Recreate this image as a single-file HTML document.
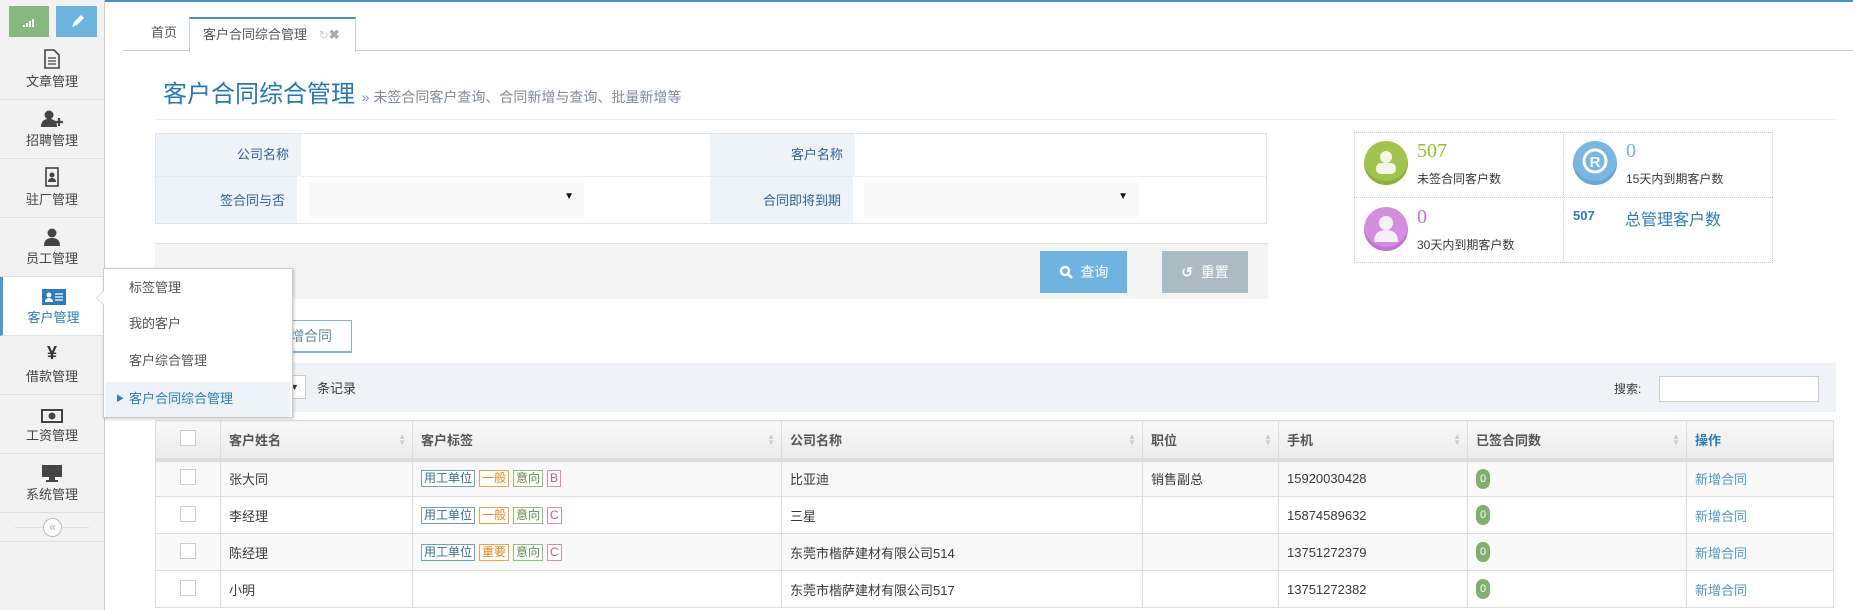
<!DOCTYPE html>
<html><head><meta charset="utf-8"><style>
*{box-sizing:border-box;margin:0;padding:0}
body{width:1853px;height:610px;overflow:hidden;background:#fff;font-family:"Liberation Sans","Noto Sans CJK SC",sans-serif;font-size:13px;color:#393939;position:relative}
.a{position:absolute}
#side{left:0;top:0;width:105px;height:610px;background:#f2f2f2;border-right:1px solid #ccc}
.si{position:absolute;left:0;width:104px;height:59px;border-bottom:1px solid #e0e0e0;text-align:center;color:#444;font-size:13px}
.si .ic{height:30px;display:flex;align-items:flex-end;justify-content:center;padding-bottom:2px}
.si.on{background:#fff;color:#2b7dbc;border-left:3px solid #4f99c6}
.tabs{left:123px;top:50px;width:1730px;border-top:1px solid #c5d0dc}
.tab{top:17px;height:34px;line-height:32px;font-size:13px;color:#555}
.lab{background:#edf3f7;color:#336199;text-align:right;padding-right:12px;font-size:13px}
.sel{background:#f9f9f9;height:34px}
.tag{display:inline-block;border:1px solid;font-size:12px;line-height:15px;padding:0 2px;margin-right:4px;background:#fff}
th,td{border:1px solid #ddd;text-align:left;padding-left:8px;font-weight:normal}
table{border-collapse:collapse;position:absolute;left:155px;top:420px;width:1679px;table-layout:fixed}
th{height:39px;background:linear-gradient(#f8f8f8,#ececec);color:#555;font-weight:bold;border-bottom:4px solid #ddd;position:relative}
td{height:37px;color:#393939}
tr.odd td{background:#f9f9f9}
.srt{position:absolute;right:6px;top:13px;color:#ccc;font-size:8px;line-height:6px}
.cb{display:inline-block;width:16px;height:16px;border:1px solid #ccc;background:#fff}
.badge{display:inline-block;width:14px;height:20px;border-radius:7px;background:#82af6f;color:#fff;font-size:11px;text-align:center;line-height:20px}
.lnk{color:#4f99c6}
.dd{position:absolute;left:25px;color:#555;font-size:13px;line-height:16px}
</style></head><body>
<div class="a" style="left:0;top:0;width:1853px;height:2px;background:#4e8fc2"></div>
<div id="side" class="a">
 <div class="a" style="left:9px;top:6px;width:40px;height:31px;background:#87b87f"><svg width="40" height="31"><g fill="#fff"><rect x="14" y="19" width="2" height="2"/><rect x="17" y="17" width="2" height="4"/><rect x="20" y="15" width="2" height="6"/><rect x="23" y="13" width="2" height="8"/></g></svg></div>
 <div class="a" style="left:56px;top:6px;width:41px;height:31px;background:#6fb3e0"><svg width="41" height="31"><path d="M16 21l2-5 7-7 3 3-7 7z" fill="#fff"/></svg></div>
 <div class="si" style="top:41px"><div class="ic"><svg width="16" height="20"><path d="M1 1h9l5 5v13H1z" fill="none" stroke="#444" stroke-width="1.6"/><path d="M4 9h8M4 12h8M4 15h8" stroke="#444" stroke-width="1.3"/></svg></div>文章管理</div>
 <div class="si" style="top:100px"><div class="ic"><svg width="22" height="18"><circle cx="8" cy="5" r="4.5" fill="#444"/><path d="M0 17c0-6 3-8 8-8s8 2 8 8z" fill="#444"/><path d="M14 12h8M18 8v8" stroke="#444" stroke-width="2.2"/></svg></div>招聘管理</div>
 <div class="si" style="top:159px"><div class="ic"><svg width="14" height="20"><rect x="1" y="1" width="12" height="18" fill="none" stroke="#444" stroke-width="1.6"/><circle cx="7" cy="8" r="2.5" fill="#444"/><path d="M3 15c0-3 2-4 4-4s4 1 4 4z" fill="#444"/></svg></div>驻厂管理</div>
 <div class="si" style="top:218px"><div class="ic"><svg width="16" height="18"><circle cx="8" cy="5" r="4.5" fill="#444"/><path d="M0 18c0-6 3-8 8-8s8 2 8 8z" fill="#444"/></svg></div>员工管理</div>
 <div class="si on" style="top:277px;left:0;width:104px"><div class="ic"><svg width="24" height="16"><rect width="24" height="16" fill="#2b7dbc"/><circle cx="7" cy="6" r="2.5" fill="#fff"/><path d="M3 13c0-3 2-4 4-4s4 1 4 4z" fill="#fff"/><path d="M13 5h8M13 8h8M13 11h8" stroke="#fff" stroke-width="1.3"/></svg></div>客户管理</div>
 <div class="si" style="top:336px"><div class="ic" style="font-size:18px;font-weight:bold;color:#333">¥</div>借款管理</div>
 <div class="si" style="top:395px"><div class="ic"><svg width="22" height="14"><rect x="1" y="1" width="20" height="12" fill="none" stroke="#444" stroke-width="2"/><circle cx="11" cy="7" r="3.5" fill="#444"/></svg></div>工资管理</div>
 <div class="si" style="top:454px"><div class="ic"><svg width="22" height="18"><rect x="1" y="1" width="20" height="12" fill="#444"/><rect x="8" y="13" width="6" height="3" fill="#444"/><rect x="5" y="16" width="12" height="2" fill="#444"/></svg></div>系统管理</div>
 <div class="a" style="top:513px;left:0;width:104px;height:29px;border-bottom:1px solid #e0e0e0"><div class="a" style="left:15px;top:14px;width:74px;border-top:1px solid #ddd"></div><div class="a" style="left:43px;top:5px;width:19px;height:19px;border-radius:50%;border:1px solid #bbb;background:#fff;color:#aaa;font-size:12px;line-height:16px;text-align:center">«</div></div>
</div>
<div class="a tabs"></div>
<div class="a tab" style="left:151px">首页</div>
<div class="a tab" style="left:189px;width:167px;background:#fff;border:1px solid #c5d0dc;border-top:2px solid #4c8fbd;border-bottom:none;padding-left:13px;height:35px">客户合同综合管理 <span style="color:#ccc;font-size:12px;margin-left:8px">↻</span><span style="color:#aaa;font-weight:bold">✖</span></div>
<div class="a" style="left:163px;top:74px;font-size:24px;color:#2679b5">客户合同综合管理 <span style="font-size:14px;color:#8089a0">» 未签合同客户查询、合同新增与查询、批量新增等</span></div>
<div class="a" style="left:155px;top:119px;width:1681px;border-top:1px dotted #e2e2e2"></div>
<!-- form -->
<div class="a" style="left:155px;top:133px;width:1112px;height:91px;border:1px solid #dde6ee"></div>
<div class="a lab" style="left:156px;top:134px;width:145px;height:42px;line-height:42px">公司名称</div>
<div class="a lab" style="left:156px;top:176px;width:141px;height:47px;line-height:47px;border-top:1px dotted #d4e1ee">签合同与否</div>
<div class="a lab" style="left:710px;top:134px;width:145px;height:42px;line-height:42px">客户名称</div>
<div class="a lab" style="left:710px;top:176px;width:143px;height:47px;line-height:47px;border-top:1px dotted #d4e1ee">合同即将到期</div>
<div class="a" style="left:301px;top:176px;width:409px;border-top:1px dotted #d4e1ee"></div>
<div class="a" style="left:855px;top:176px;width:411px;border-top:1px dotted #d4e1ee"></div>
<div class="a sel" style="left:310px;top:183px;width:274px"><span class="a" style="right:10px;top:8px;font-size:10px;color:#111">▼</span></div>
<div class="a sel" style="left:864px;top:183px;width:274px"><span class="a" style="right:10px;top:8px;font-size:10px;color:#111">▼</span></div>
<div class="a" style="left:155px;top:243px;width:1113px;height:56px;background:#f4f4f4;border-top:1px solid #e2e2e2"></div>
<div class="a" style="left:1040px;top:251px;width:87px;height:42px;background:#6fb3e0;color:#fff;font-size:14px;line-height:42px;text-align:center"><svg width="14" height="14" style="vertical-align:-2px"><circle cx="6" cy="6" r="4" fill="none" stroke="#fff" stroke-width="2.5"/><path d="M9 9l4 4" stroke="#fff" stroke-width="2.5"/></svg>&nbsp; 查询</div>
<div class="a" style="left:1162px;top:251px;width:86px;height:42px;background:#abbac3;color:#fff;font-size:14px;line-height:42px;text-align:center"><b>↺</b>&nbsp; 重置</div>
<!-- stats -->
<div class="a" style="left:1354px;top:132px;width:419px;height:131px;border:1px dotted #ccc"></div>
<div class="a" style="left:1563px;top:132px;height:131px;border-left:1px dotted #ccc"></div>
<div class="a" style="left:1354px;top:197px;width:419px;border-top:1px dotted #ccc"></div>
<div class="a" style="left:1364px;top:141px;width:44px;height:44px;border-radius:50%;background:#a0c44d;box-shadow:inset 0 -4px 0 #8fb13c"><svg width="44" height="44"><circle cx="22" cy="16" r="6" fill="#f4f7e8"/><rect x="12" y="22" width="20" height="11" rx="5" fill="#f4f7e8"/></svg></div>
<div class="a" style="left:1417px;top:140px;font-size:20px;color:#9abc32;font-family:'Liberation Serif',serif">507</div>
<div class="a" style="left:1417px;top:170px;font-size:12px">未签合同客户数</div>
<div class="a" style="left:1573px;top:141px;width:44px;height:44px;border-radius:50%;background:#7ab6e0;box-shadow:inset 0 -4px 0 #6aa5d4"><svg width="44" height="44"><circle cx="22" cy="20" r="11" fill="none" stroke="#fff" stroke-width="3"/><text x="22" y="26" fill="#fff" font-size="15" font-weight="bold" text-anchor="middle" font-family="Liberation Sans">R</text></svg></div>
<div class="a" style="left:1626px;top:140px;font-size:20px;color:#6fb3e0;font-family:'Liberation Serif',serif">0</div>
<div class="a" style="left:1626px;top:170px;font-size:12px">15天内到期客户数</div>
<div class="a" style="left:1364px;top:207px;width:44px;height:44px;border-radius:50%;background:#d28fde;box-shadow:inset 0 -4px 0 #c572d6"><svg width="44" height="44"><circle cx="22" cy="16" r="7" fill="#f6eef8"/><path d="M10 35c0-9 5-12 12-12s12 3 12 12z" fill="#f6eef8"/></svg></div>
<div class="a" style="left:1417px;top:206px;font-size:20px;color:#c572d6;font-family:'Liberation Serif',serif">0</div>
<div class="a" style="left:1417px;top:236px;font-size:12px">30天内到期客户数</div>
<div class="a" style="left:1573px;top:208px;font-size:13px;font-weight:bold;color:#2b7dbc">507</div>
<div class="a" style="left:1625px;top:206px;font-size:16px;color:#2b7dbc">总管理客户数</div>
<!-- toolbar -->
<div class="a" style="left:155px;top:320px;width:197px;height:33px;border:1px solid #8aafce;border-bottom-width:2px;color:#6688a6;font-size:14px;line-height:30px;padding-left:120px">新增合同</div>
<div class="a" style="left:155px;top:363px;width:1681px;height:49px;background:#eff3f8"></div>
<div class="a" style="left:270px;top:375px;width:36px;height:24px;background:#fff;border:1px solid #ccc;font-size:9px;line-height:22px;text-align:right;padding-right:6px">▼</div>
<div class="a" style="left:317px;top:378px">条记录</div>
<div class="a" style="left:1614px;top:380px;font-size:12px">搜索:</div>
<div class="a" style="left:1659px;top:376px;width:160px;height:26px;background:#fff;border:1px solid #ccc"></div>
<!-- table -->
<table>
<colgroup><col style="width:65px"><col style="width:192px"><col style="width:369px"><col style="width:361px"><col style="width:136px"><col style="width:189px"><col style="width:219px"><col></colgroup>
<tr><th style="text-align:center;padding:0"><span class="cb"></span></th><th>客户姓名<span class="srt">▲<br>▼</span></th><th>客户标签<span class="srt">▲<br>▼</span></th><th>公司名称<span class="srt">▲<br>▼</span></th><th>职位<span class="srt">▲<br>▼</span></th><th>手机<span class="srt">▲<br>▼</span></th><th>已签合同数<span class="srt">▲<br>▼</span></th><th style="color:#2b7dbc">操作</th></tr>
<tr class="odd"><td style="text-align:center;padding:0"><span class="cb"></span></td><td>张大同</td><td><span class="tag" style="border-color:#6fa0c0;color:#3a6d8f">用工单位</span><span class="tag" style="border-color:#f0a448;color:#e28a22">一般</span><span class="tag" style="border-color:#94c07e;color:#5d8c48">意向</span><span class="tag" style="border-color:#d98fa8;color:#c55a7e">B</span></td><td>比亚迪</td><td>销售副总</td><td>15920030428</td><td><span class="badge">0</span></td><td><span class="lnk">新增合同</span></td></tr>
<tr><td style="text-align:center;padding:0"><span class="cb"></span></td><td>李经理</td><td><span class="tag" style="border-color:#6fa0c0;color:#3a6d8f">用工单位</span><span class="tag" style="border-color:#f0a448;color:#e28a22">一般</span><span class="tag" style="border-color:#94c07e;color:#5d8c48">意向</span><span class="tag" style="border-color:#d98fa8;color:#c55a7e">C</span></td><td>三星</td><td></td><td>15874589632</td><td><span class="badge">0</span></td><td><span class="lnk">新增合同</span></td></tr>
<tr class="odd"><td style="text-align:center;padding:0"><span class="cb"></span></td><td>陈经理</td><td><span class="tag" style="border-color:#6fa0c0;color:#3a6d8f">用工单位</span><span class="tag" style="border-color:#f0a448;color:#e28a22">重要</span><span class="tag" style="border-color:#94c07e;color:#5d8c48">意向</span><span class="tag" style="border-color:#d98fa8;color:#c55a7e">C</span></td><td>东莞市楷萨建材有限公司514</td><td></td><td>13751272379</td><td><span class="badge">0</span></td><td><span class="lnk">新增合同</span></td></tr>
<tr><td style="text-align:center;padding:0"><span class="cb"></span></td><td>小明</td><td></td><td>东莞市楷萨建材有限公司517</td><td></td><td>13751272382</td><td><span class="badge">0</span></td><td><span class="lnk">新增合同</span></td></tr>
</table>
<!-- dropdown -->
<div class="a" style="left:103px;top:268px;width:190px;height:150px;background:#fff;border:1px solid #ccc;box-shadow:1px 1px 3px rgba(0,0,0,.2)">
 <div class="dd" style="top:11px">标签管理</div>
 <div class="dd" style="top:47px">我的客户</div>
 <div class="dd" style="top:84px">客户综合管理</div>
 <div class="a" style="left:2px;top:113px;width:184px;height:35px;background:#edf2f6;color:#2b7dbc;line-height:34px;padding-left:23px">客户合同综合管理<span class="a" style="left:10px;top:0;font-size:8px;color:#2b7dbc">▶</span></div>
</div>
<div class="a" style="left:96px;top:290px;width:0;height:0;border:8px solid transparent;border-right-color:#ccc;border-left:0"></div>
<div class="a" style="left:97px;top:290px;width:0;height:0;border:8px solid transparent;border-right-color:#fff;border-left:0"></div>
</body></html>
